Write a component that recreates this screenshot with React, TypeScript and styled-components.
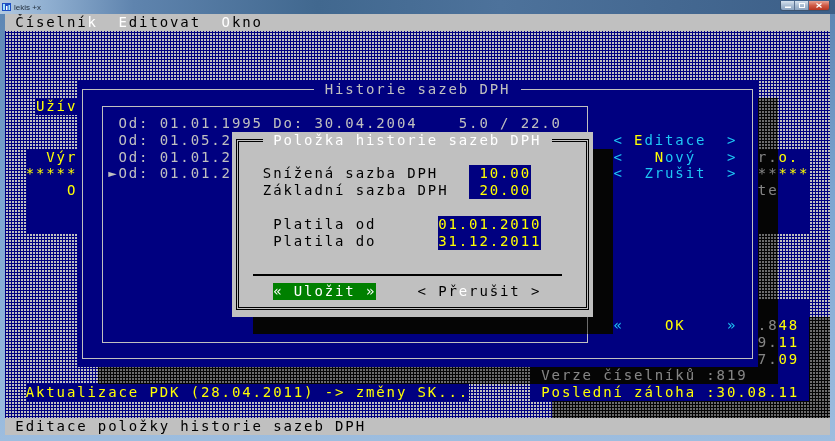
import React from "react";
import styled, { createGlobalStyle, css } from "styled-components";

// one text cell: 80 x 25 cells fill the 825 x 421 client area
const CW = 10.3125;
const CH = 16.84;
const FONT_PX = 14;

const BLUE = "#000080";
const GRAY = "#c0c0c0";
const YELLOW = "#ffff00";
const CYAN = "#1ec8f5";
const WHITE = "#ffffff";
const GREEN = "#008000";

const GlobalStyle = createGlobalStyle`
  html, body {
    margin: 0;
    padding: 0;
    background: #2b4a6e;
  }
  body {
    width: 835px;
    height: 441px;
    overflow: hidden;
  }
`;

const AppWindow = styled.div`
  width: 835px;
  height: 441px;
  box-sizing: border-box;
  padding: 0 5px 6px;
  display: flex;
  flex-direction: column;
  background: linear-gradient(180deg, #5b84b2 0%, #7da6d1 45%, #9dbddf 100%);
`;

const TitleBar = styled.div`
  height: 14px;
  margin: 0 -5px;
  display: flex;
  align-items: center;
  background: linear-gradient(
    90deg,
    #b3c9df 0%,
    #93b2d3 5%,
    #5f84ae 16%,
    #41688f 38%,
    #4d729b 60%,
    #3c5f88 100%
  );
`;

const AppIcon = styled.svg`
  width: 9px;
  height: 8px;
  margin-left: 2px;
  flex: none;
`;

const TitleText = styled.span`
  margin-left: 3px;
  font-family: "Liberation Sans", "DejaVu Sans", sans-serif;
  font-size: 8px;
  color: #23303f;
`;

const CaptionButtons = styled.div`
  margin-left: auto;
  margin-right: 5px;
  align-self: flex-start;
  margin-top: 1px;
  display: flex;
  height: 9px;
  border: 1px solid #3c536f;
  border-top: none;
  border-radius: 0 0 3px 3px;
  overflow: hidden;
`;

const CaptionButton = styled.div<{ $w: number; $close?: boolean }>`
  width: ${(p) => p.$w}px;
  display: flex;
  align-items: center;
  justify-content: center;
  background: ${(p) =>
    p.$close
      ? "linear-gradient(180deg, #e7a293 0%, #cf5a45 50%, #b8331f 100%)"
      : "linear-gradient(180deg, #d6e2ee 0%, #a9bdd3 50%, #8aa3c0 100%)"};
  & + & {
    border-left: 1px solid #5a7190;
  }
`;

const Console = styled.div`
  display: grid;
  grid-template-columns: repeat(80, ${CW}px);
  grid-template-rows: repeat(25, ${CH}px);
  width: 825px;
  height: 421px;
  overflow: hidden;
  background-color: ${BLUE};
  background-image: conic-gradient(from 90deg at 1px 1px, ${GRAY} 90deg, ${BLUE} 0);
  background-size: 3px 3px;
  font-family: "DejaVu Sans Mono", monospace;
  font-size: ${FONT_PX}px;
  line-height: ${CH}px;
  letter-spacing: ${CW - FONT_PX * 0.60205}px;
`;

type Cell = { $c: number; $r: number; $w?: number; $h?: number };

const cell = css<Cell>`
  grid-column: ${(p) => p.$c + 1} / span ${(p) => p.$w ?? 1};
  grid-row: ${(p) => p.$r + 1} / span ${(p) => p.$h ?? 1};
`;

const Bar = styled.div<{ $r: number }>`
  grid-column: 1 / -1;
  grid-row: ${(p) => p.$r + 1};
  position: relative;
  display: flex;
  gap: ${2 * CW}px;
  padding-left: ${CW}px;
  background: ${GRAY};
  color: #000;
  white-space: pre;
`;

const Key = styled.span<{ $fg?: string }>`
  color: ${(p) => p.$fg ?? WHITE};
`;

const Pane = styled.div<Cell & { $bg: string; $fg?: string }>`
  ${cell}
  position: relative;
  display: grid;
  grid-template-columns: repeat(${(p) => p.$w}, ${CW}px);
  grid-template-rows: repeat(${(p) => p.$h}, ${CH}px);
  background: ${(p) => p.$bg};
  color: ${(p) => p.$fg ?? YELLOW};
`;

const InfoPanel = styled(Pane)``;
const HistoryWindow = styled(Pane)``;
const ListBox = styled(Pane)``;
const Dialog = styled(Pane)``;

const Shadow = styled.div<Cell>`
  ${cell}
  position: relative;
  backdrop-filter: grayscale(1) brightness(0.56);
`;

const SingleFrame = styled.div`
  grid-column: 1 / -1;
  grid-row: 1 / -1;
  margin: ${CH / 2 - 0.5}px ${CW / 2 - 0.5}px;
  border: 1px solid ${GRAY};
`;

const DoubleFrame = styled.div`
  grid-column: 1 / -1;
  grid-row: 1 / -1;
  margin: ${CH / 2 - 1.5}px ${CW / 2 - 1.5}px;
  border: 3px double #000;
`;

const Rule = styled.div<Cell>`
  ${cell}
  align-self: center;
  height: 2px;
  background: #000;
`;

const Run = styled.span<Cell & { $fg?: string; $bg?: string; $right?: boolean }>`
  ${cell}
  position: relative;
  white-space: pre;
  color: ${(p) => p.$fg ?? "inherit"};
  background: ${(p) => p.$bg ?? "transparent"};
  text-align: ${(p) => (p.$right ? "right" : "left")};
`;

const Push = styled.span<Cell & { $fg: string; $bg?: string }>`
  ${cell}
  position: relative;
  display: flex;
  white-space: pre;
  color: ${(p) => p.$fg};
  background: ${(p) => p.$bg ?? "transparent"};
`;

const Caption = styled.span<{ $inner: number; $pad: number; $fg?: string }>`
  box-sizing: border-box;
  width: ${(p) => p.$inner * CW}px;
  padding-left: ${(p) => p.$pad * CW}px;
  color: ${(p) => p.$fg ?? "inherit"};
`;

function hotText(text: string, hot?: number, hotFg?: string) {
  if (hot === undefined) return text;
  const chars = Array.from(text);
  return (
    <>
      {chars.slice(0, hot).join("")}
      <Key $fg={hotFg}>{chars[hot]}</Key>
      {chars.slice(hot + 1).join("")}
    </>
  );
}

type TextProps = {
  c: number;
  r: number;
  text: string;
  w?: number;
  fg?: string;
  bg?: string;
  right?: boolean;
};

function Text({ c, r, text, w, fg, bg, right }: TextProps) {
  return (
    <Run $c={c} $r={r} $w={w ?? Array.from(text).length} $fg={fg} $bg={bg} $right={right}>
      {text}
    </Run>
  );
}

type ButtonProps = {
  c: number;
  r: number;
  label: string;
  inner?: number;
  open?: string;
  close?: string;
  fg: string;
  labelFg?: string;
  bg?: string;
  hot?: number;
  hotFg?: string;
};

function PushButton({ c, r, label, inner = 10, open = "<", close = ">", fg, labelFg, bg, hot, hotFg }: ButtonProps) {
  const pad = Math.floor((inner - Array.from(label).length) / 2);
  return (
    <Push $c={c} $r={r} $w={inner + 2} $fg={fg} $bg={bg}>
      {open}
      <Caption $inner={inner} $pad={pad} $fg={labelFg}>
        {hotText(label, hot, hotFg)}
      </Caption>
      {close}
    </Push>
  );
}

const menu = [
  { label: "Číselník", hot: 7 },
  { label: "Editovat", hot: 0 },
  { label: "Okno", hot: 0 },
];

// only the part of each row that the edit dialog leaves visible
const history = [
  "Od: 01.01.1995 Do: 30.04.2004    5.0 / 22.0",
  "Od: 01.05.2",
  "Od: 01.01.2",
  "Od: 01.01.2",
];

export default function App() {
  return (
    <>
      <GlobalStyle />
      <AppWindow>
        <TitleBar>
          <AppIcon viewBox="0 0 9 8">
            <rect width="9" height="8" fill="#1d4fc4" />
            <rect x="1" y="1" width="2" height="6" fill="#9fe3ff" />
            <rect x="4" y="3" width="1.5" height="4" fill="#ffffff" />
            <rect x="6.5" y="2" width="1.5" height="5" fill="#9fe3ff" />
          </AppIcon>
          <TitleText>lekis +x</TitleText>
          <CaptionButtons>
            <CaptionButton $w={13}>
              <svg width="6" height="4" viewBox="0 0 6 4">
                <rect x="0" y="2.5" width="6" height="1.5" fill="#fff" />
              </svg>
            </CaptionButton>
            <CaptionButton $w={13}>
              <svg width="6" height="5" viewBox="0 0 6 5">
                <rect x="0.5" y="0.5" width="5" height="4" fill="none" stroke="#fff" />
              </svg>
            </CaptionButton>
            <CaptionButton $w={20} $close>
              <svg width="6" height="5" viewBox="0 0 6 5">
                <path d="M0.5 0.5 L5.5 4.5 M5.5 0.5 L0.5 4.5" stroke="#fff" strokeWidth="1.3" />
              </svg>
            </CaptionButton>
          </CaptionButtons>
        </TitleBar>

        <Console>
          <Bar $r={0}>
            {menu.map((m) => (
              <span key={m.label}>{hotText(m.label, m.hot)}</span>
            ))}
          </Bar>

          <Text c={3} r={5} text="Užív" fg={YELLOW} bg={BLUE} />

          <InfoPanel $c={2} $r={8} $w={76} $h={5} $bg={BLUE}>
            <Text c={2} r={0} text="Výr" />
            <Text c={71} r={0} text="r.o." />
            <Text c={0} r={1} text="*****" />
            <Text c={71} r={1} text="*****" />
            <Text c={4} r={2} text="O" />
            <Text c={71} r={2} text="te" />
          </InfoPanel>

          <Text c={2} r={22} text="Aktualizace PDK (28.04.2011) -> změny SK..." fg={YELLOW} bg={BLUE} />

          <Shadow $c={53} $r={18} $w={27} $h={6} />
          <InfoPanel $c={51} $r={17} $w={27} $h={6} $bg={BLUE}>
            <Text c={22} r={1} text=".848" />
            <Text c={22} r={2} text="9.11" />
            <Text c={22} r={3} text="7.09" />
            <Text c={1} r={4} text="Verze číselníků :819" />
            <Text c={1} r={5} text="Poslední záloha :30.08.11" />
          </InfoPanel>

          <Shadow $c={9} $r={5} $w={66} $h={17} />
          <HistoryWindow $c={7} $r={4} $w={66} $h={17} $bg={BLUE} $fg={GRAY}>
            <SingleFrame />
            <Text c={23} r={0} text=" Historie sazeb DPH " bg={BLUE} />
            <ListBox $c={2} $r={1} $w={48} $h={15} $bg={BLUE} $fg={GRAY}>
              <SingleFrame />
              {history.map((row, i) => (
                <React.Fragment key={i}>
                  {i === history.length - 1 && <Text c={1} r={i + 1} text="►" />}
                  <Text c={2} r={i + 1} text={row} />
                </React.Fragment>
              ))}
            </ListBox>
            <PushButton c={52} r={3} label="Editace" fg={CYAN} hot={0} hotFg={YELLOW} />
            <PushButton c={52} r={4} label="Nový" fg={CYAN} hot={0} hotFg={YELLOW} />
            <PushButton c={52} r={5} label="Zrušit" fg={CYAN} />
            <PushButton c={52} r={14} label="OK" open="«" close="»" fg={CYAN} labelFg={YELLOW} />
          </HistoryWindow>

          <Shadow $c={24} $r={8} $w={35} $h={11} />
          <Dialog $c={22} $r={7} $w={35} $h={11} $bg={GRAY} $fg="#000">
            <DoubleFrame />
            <Text c={3} r={0} text=" Položka historie sazeb DPH " fg={WHITE} bg={GRAY} />
            <Text c={3} r={2} text="Snížená sazba DPH" />
            <Text c={3} r={3} text="Základní sazba DPH" />
            <Text c={23} r={2} w={6} text="10.00" fg={YELLOW} bg={BLUE} right />
            <Text c={23} r={3} w={6} text="20.00" fg={YELLOW} bg={BLUE} right />
            <Text c={4} r={5} text="Platila od" />
            <Text c={4} r={6} text="Platila do" />
            <Text c={20} r={5} text="01.01.2010" fg={YELLOW} bg={BLUE} />
            <Text c={20} r={6} text="31.12.2011" fg={YELLOW} bg={BLUE} />
            <Rule $c={2} $r={8} $w={30} />
            <PushButton c={4} r={9} inner={8} label="Uložit" open="«" close="»" fg={WHITE} bg={GREEN} />
            <PushButton c={18} r={9} label="Přerušit" fg="#000" hot={2} hotFg={WHITE} />
          </Dialog>

          <Bar $r={24}>Editace položky historie sazeb DPH</Bar>
        </Console>
      </AppWindow>
    </>
  );
}
